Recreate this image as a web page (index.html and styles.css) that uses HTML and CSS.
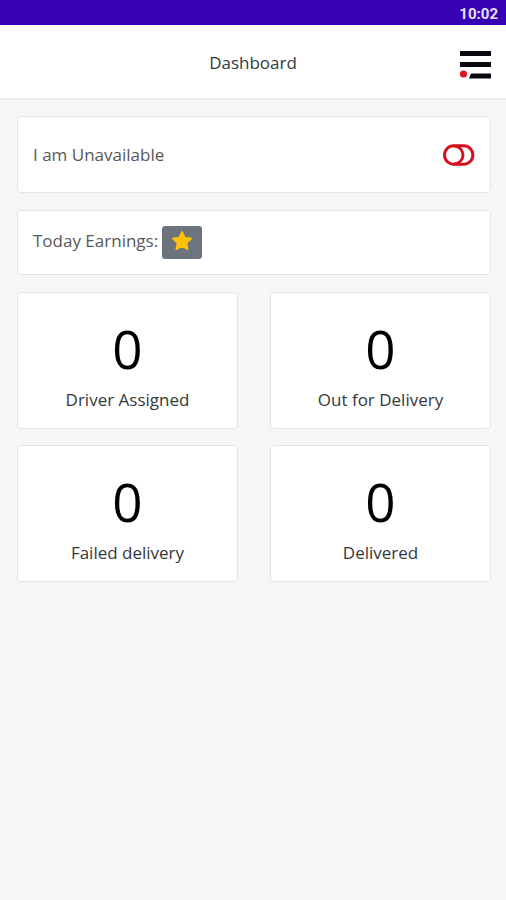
FILE: index.html
```html
<!DOCTYPE html>
<html lang="en">
<head>
  <meta charset="utf-8">
  <meta name="viewport" content="width=device-width, initial-scale=1">
  <title>Dashboard</title>
  <link rel="stylesheet" href="styles.css">
</head>
<body>
  <div class="status-bar"><time>10:02</time></div>
  <header class="app-bar">
    <h1 class="title">Dashboard</h1>
    <button class="icon-button menu" type="button" aria-label="Menu">
      <svg width="32" height="32" viewBox="0 0 32 32" aria-hidden="true">
        <path d="M1 2h31v5H1zM1 13h31v5H1zM12 24.500h20v5H10z" fill="#08090f"/>
        <circle cx="4.500" cy="25" r="3.600" fill="#dc1420"/>
      </svg>
    </button>
  </header>
  <main class="content">
    <section class="card availability">
      <span>I am Unavailable</span>
      <button class="icon-button" type="button" role="switch" aria-checked="false" aria-label="Availability">
        <svg width="32" height="22" viewBox="0 0 32 22" fill="none" stroke="#d5101c" stroke-width="3" aria-hidden="true">
          <rect x="1.500" y="1.800" width="28.400" height="18.400" rx="9.200"/>
          <path d="M11 2a9 9 0 0 1 0 18" stroke-width="2.800"/>
        </svg>
      </button>
    </section>
    <section class="card earnings">
      <span>Today Earnings:</span>
      <button class="star-button" type="button" aria-label="Show earnings">
        <svg width="20" height="20" viewBox="0 0 20 20" aria-hidden="true">
          <path d="M10 1l2.700 5.700 6.300.8-4.600 4.300 1.200 6.300L10 15l-5.600 3.100 1.200-6.300L1 7.500l6.300-.8z" fill="#ffc107" stroke="#ffc107" stroke-width="1.800" stroke-linejoin="round"/>
        </svg>
      </button>
    </section>
    <div class="stats">
      <section class="card stat"><strong class="count">0</strong><span>Driver Assigned</span></section>
      <section class="card stat"><strong class="count">0</strong><span>Out for Delivery</span></section>
      <section class="card stat"><strong class="count">0</strong><span>Failed delivery</span></section>
      <section class="card stat"><strong class="count">0</strong><span>Delivered</span></section>
    </div>
  </main>
</body>
</html>
```
FILE: styles.css
```css
* {
  box-sizing: border-box;
}

body {
  margin: 0;
  background: #f6f6f6;
  color: #34383c;
  font: 400 17px/24px "Open Sans", sans-serif;
}

button {
  padding: 0;
  border: 0;
  background: none;
  cursor: pointer;
}

svg {
  display: block;
}

.status-bar {
  display: flex;
  justify-content: flex-end;
  height: 25px;
  padding: 2px 8px 0;
  background: #3700b3;
  color: #e9e2f8;
  font: 700 15px/24px Roboto, sans-serif;
}

.app-bar {
  display: grid;
  grid-template-columns: 32px 1fr 32px;
  align-items: center;
  height: 75px;
  padding: 0 15px;
  border-bottom: 2px solid #ededed;
  background: #fff;
}

.title {
  grid-column: 2;
  margin: 0;
  padding-top: 2px;
  font-size: 17px;
  font-weight: 400;
  text-align: center;
}

.menu {
  padding-top: 6px;
}

.content {
  display: grid;
  gap: 17px;
  padding: 16px 15px 16px 17px;
}

.card {
  border: 1px solid #e3e5e5;
  border-radius: 4px;
  background: #fff;
}

.availability,
.earnings {
  display: flex;
  align-items: center;
  padding: 15px;
  color: #55585b;
}

.availability {
  justify-content: space-between;
  min-height: 77px;
}

.earnings {
  align-items: flex-start;
  gap: 4px;
  min-height: 65px;
}

.earnings span {
  padding-top: 3px;
}

.star-button {
  display: grid;
  place-items: center;
  width: 40px;
  height: 33px;
  padding-bottom: 4px;
  border-radius: 3px;
  background: #6c757d;
}

.stats {
  display: grid;
  grid-template-columns: 1fr 1fr;
  gap: 16px 32px;
}

.stat {
  display: flex;
  flex-direction: column;
  align-items: center;
  padding: 24px 8px 16px;
}

.count {
  padding-bottom: 7px;
  color: #000;
  font-size: 53px;
  font-weight: 400;
  line-height: 64px;
}
```
